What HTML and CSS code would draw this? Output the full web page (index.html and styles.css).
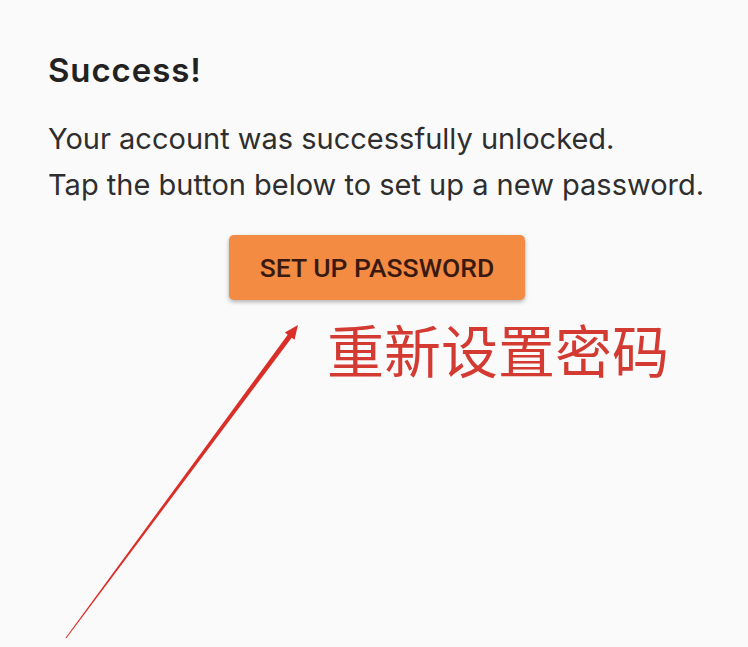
FILE: index.html
```html
<!DOCTYPE html>
<html lang="en">
<head>
<meta charset="utf-8">
<title>Success</title>
<link rel="stylesheet" href="styles.css">
</head>
<body>
<main class="page">
  <h1 class="title">Success!</h1>
  <p class="message">Your account was successfully unlocked.<br>Tap the button below to set up a new password.</p>
  <div class="actions">
    <button class="btn" type="button">SET UP PASSWORD</button>
  </div>
  <div class="note" lang="zh-CN">重新设置密码</div>
  <svg class="arrow" width="748" height="647" viewBox="0 0 748 647" aria-hidden="true">
    <polygon points="298,325 294.5,339.8 291.7,337.7 66.4,638.3 65.6,637.7 287.7,334.7 284.9,332.6" fill="#d92f28"/>
  </svg>
</main>
</body>
</html>
```
FILE: styles.css
```css
html, body {
  margin: 0;
  padding: 0;
  background: #fafafa;
}
.page {
  position: relative;
  width: 748px;
  height: 647px;
  overflow: hidden;
  padding: 50px 0 0 48px;
  box-sizing: border-box;
  font-family: Inter, "Liberation Sans", Arial, sans-serif;
}
.title {
  margin: 0;
  font-size: 33px;
  line-height: 40px;
  font-weight: 600;
  letter-spacing: 0.9px;
  color: #222;
}
.message {
  margin: 26px 0 0 0;
  font-size: 29px;
  line-height: 46px;
  color: #2e2e2e;
}
.actions {
  display: flex;
  justify-content: center;
  padding-right: 42px;
  margin-top: 27px;
}
.btn {
  width: 296px;
  height: 65px;
  border: none;
  border-radius: 5px;
  background: #f38b43;
  color: #3a1a10;
  font-family: Roboto, "Liberation Sans", sans-serif;
  font-weight: 500;
  font-size: 26.5px;
  box-shadow: 0 2px 4px rgba(0,0,0,0.3);
}
.note {
  position: absolute;
  left: 327px;
  top: 313px;
  font-family: "Noto Sans CJK SC", sans-serif;
  font-size: 57px;
  line-height: 70px;
  color: #d23a32;
  white-space: nowrap;
}
.arrow {
  position: absolute;
  left: 0;
  top: 0;
}
```
